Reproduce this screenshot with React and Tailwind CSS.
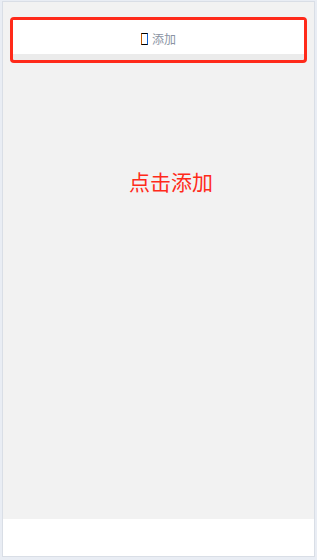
import React from "react";

const font = { fontFamily: '"Noto Sans CJK SC", "Noto Sans", sans-serif' };

export default function App() {
  return (
    <div className="w-[317px] h-[560px] bg-[#e9edf4] px-[2px] pt-[1px] pb-[3px]" style={font}>
      <div className="h-full border border-[#d9dee6] bg-[#f2f2f2] flex flex-col">
        {/* add button */}
        <div className="px-[7px] pt-[15px]">
          <div className="h-[46px] border-[3px] border-[#ff2a1a] rounded-[4px] bg-[#ebebeb]">
            <div className="h-[34px] pt-[3px] bg-white flex items-center justify-center gap-[4px]">
              <span className="w-[7px] h-[12px] border border-black border-l-[#c05a00] border-r-[#1060d0]" />
              <span className="text-[12px] leading-none text-[#8a93a3]">添加</span>
            </div>
          </div>
        </div>

        {/* empty area */}
        <div className="flex-1 pl-[126px] pt-[104px]">
          <div className="text-[21px] leading-[28px] text-[#ff2a1a]">点击添加</div>
        </div>

        {/* bottom bar */}
        <div className="h-[37px] bg-white" />
      </div>
    </div>
  );
}
